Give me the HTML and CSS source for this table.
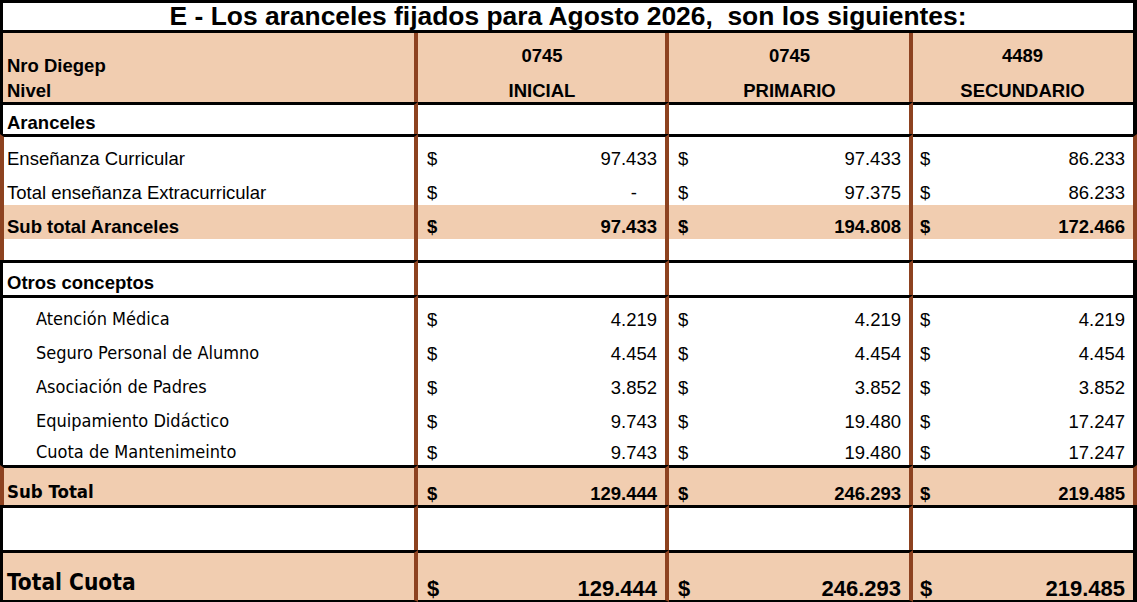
FILE: index.html
```html
<!DOCTYPE html>
<html lang="es">
<head>
<meta charset="utf-8">
<title>Aranceles Agosto 2026</title>
<link rel="stylesheet" href="styles.css">
</head>
<body>
<table class="sheet">
  <colgroup>
    <col class="c1"><col class="c2"><col class="c3"><col class="c4">
  </colgroup>
  <tr class="r-title">
    <td colspan="4" class="title">E - Los aranceles fijados para Agosto 2026,&nbsp; son los siguientes:</td>
  </tr>
  <tr class="r-head-a peach">
    <td class="lab b">Nro Diegep</td>
    <td class="hc">0745</td>
    <td class="hc">0745</td>
    <td class="hc">4489</td>
  </tr>
  <tr class="r-head-b peach">
    <td class="lab b">Nivel</td>
    <td class="hc">INICIAL</td>
    <td class="hc">PRIMARIO</td>
    <td class="hc">SECUNDARIO</td>
  </tr>
  <tr class="r-sect top">
    <td class="lab b">Aranceles</td>
    <td></td><td></td><td></td>
  </tr>
  <tr class="r-first brown top">
    <td class="lab">Enseñanza Curricular</td>
    <td class="m"><div class="money"><span>$</span><span>97.433</span></div></td>
    <td class="m"><div class="money"><span>$</span><span>97.433</span></div></td>
    <td class="m"><div class="money"><span>$</span><span>86.233</span></div></td>
  </tr>
  <tr class="r-item brown">
    <td class="lab">Total enseñanza Extracurricular</td>
    <td class="m"><div class="money"><span>$</span><span class="dash">-</span></div></td>
    <td class="m"><div class="money"><span>$</span><span>97.375</span></div></td>
    <td class="m"><div class="money"><span>$</span><span>86.233</span></div></td>
  </tr>
  <tr class="r-item brown peach">
    <td class="lab b">Sub total Aranceles</td>
    <td class="m b"><div class="money"><span>$</span><span>97.433</span></div></td>
    <td class="m b"><div class="money"><span>$</span><span>194.808</span></div></td>
    <td class="m b"><div class="money"><span>$</span><span>172.466</span></div></td>
  </tr>
  <tr class="r-gap brown">
    <td></td><td></td><td></td><td></td>
  </tr>
  <tr class="r-sect2 top">
    <td class="lab b">Otros conceptos</td>
    <td></td><td></td><td></td>
  </tr>
  <tr class="r-first top">
    <td class="sub">Atención Médica</td>
    <td class="m"><div class="money"><span>$</span><span>4.219</span></div></td>
    <td class="m"><div class="money"><span>$</span><span>4.219</span></div></td>
    <td class="m"><div class="money"><span>$</span><span>4.219</span></div></td>
  </tr>
  <tr class="r-item">
    <td class="sub">Seguro Personal de Alumno</td>
    <td class="m"><div class="money"><span>$</span><span>4.454</span></div></td>
    <td class="m"><div class="money"><span>$</span><span>4.454</span></div></td>
    <td class="m"><div class="money"><span>$</span><span>4.454</span></div></td>
  </tr>
  <tr class="r-item">
    <td class="sub">Asociación de Padres</td>
    <td class="m"><div class="money"><span>$</span><span>3.852</span></div></td>
    <td class="m"><div class="money"><span>$</span><span>3.852</span></div></td>
    <td class="m"><div class="money"><span>$</span><span>3.852</span></div></td>
  </tr>
  <tr class="r-item">
    <td class="sub">Equipamiento Didáctico</td>
    <td class="m"><div class="money"><span>$</span><span>9.743</span></div></td>
    <td class="m"><div class="money"><span>$</span><span>19.480</span></div></td>
    <td class="m"><div class="money"><span>$</span><span>17.247</span></div></td>
  </tr>
  <tr class="r-last">
    <td class="sub">Cuota de Mantenimeinto</td>
    <td class="m"><div class="money"><span>$</span><span>9.743</span></div></td>
    <td class="m"><div class="money"><span>$</span><span>19.480</span></div></td>
    <td class="m"><div class="money"><span>$</span><span>17.247</span></div></td>
  </tr>
  <tr class="r-subtotal brown peach top">
    <td class="lab tb">Sub Total</td>
    <td class="m b"><div class="money"><span>$</span><span>129.444</span></div></td>
    <td class="m b"><div class="money"><span>$</span><span>246.293</span></div></td>
    <td class="m b"><div class="money"><span>$</span><span>219.485</span></div></td>
  </tr>
  <tr class="r-blank top">
    <td></td><td></td><td></td><td></td>
  </tr>
  <tr class="r-total peach top bottom">
    <td class="lab tb big">Total Cuota</td>
    <td class="m b big"><div class="money"><span>$</span><span>129.444</span></div></td>
    <td class="m b big"><div class="money"><span>$</span><span>246.293</span></div></td>
    <td class="m b big"><div class="money"><span>$</span><span>219.485</span></div></td>
  </tr>
</table>
</body>
</html>
```

FILE: styles.css
```css
html, body {
  margin: 0;
  padding: 0;
  background: #ffffff;
}

body {
  font-family: "Liberation Sans", Arial, sans-serif;
  color: #000;
  font-size: 18.5px;
}

.sheet {
  border-collapse: separate;
  border-spacing: 0;
  table-layout: fixed;
  width: 1137px;
}

.c1 { width: 418px; }
.c2 { width: 251px; }
.c3 { width: 244px; }
.c4 { width: 224px; }

.sheet td {
  box-sizing: border-box;
  padding: 0 8px 2px 9px;
  border-right: 4px solid #8d4220;
  vertical-align: bottom;
  line-height: 20px;
  white-space: nowrap;
  overflow: hidden;
}

.sheet td:first-child {
  border-left: 3px solid #000;
  padding-left: 4px;
}

.sheet td:last-child {
  border-right: 4px solid #000;
  padding-left: 7px;
}

.sheet td:first-child:last-child {
  padding-left: 0;
}

/* brown framed rows */
.brown td:first-child {
  border-left: 4px solid #8d4220;
  padding-left: 3px;
}

.brown td:last-child {
  border-right-color: #8d4220;
}

.top td {
  border-top: 3px solid #000;
}

.bottom td {
  border-bottom: 2px solid #000;
}

.peach td {
  background: #f1cdb0;
}

/* title */
.r-title td.title {
  height: 33px;
  border: 3px solid #000;
  border-right-width: 4px;
  padding: 0;
  text-align: center;
  vertical-align: middle;
  font-weight: 700;
  font-size: 26.4px;
  line-height: 27px;
}

.b { font-weight: 700; }

.r-head-a td { height: 43px; padding-bottom: 10px; }
.r-head-a td.lab { padding-bottom: 0; }
.r-head-b td { height: 26px; padding-bottom: 1px; }
.hc { text-align: center; font-weight: 700; }

.r-sect td { height: 32px; padding-bottom: 1px; }
.r-first td { height: 37px; }
.r-item td { height: 34px; }
.r-last td { height: 31px; }
.r-gap td { height: 21px; }
.r-sect2 td { height: 35px; }
.r-subtotal td { height: 40px; padding-bottom: 1px; }
.r-blank td { height: 45px; }
.r-total td { height: 52px; padding-bottom: 1px; }

.sub {
  font-family: "DejaVu Sans", Verdana, sans-serif;
  font-stretch: condensed;
  font-size: 18px;
  padding-left: 33px !important;
  padding-bottom: 3px !important;
}

.tb {
  font-family: "DejaVu Sans", Verdana, sans-serif;
  font-stretch: condensed;
  font-weight: 700;
  font-size: 18.5px;
  padding-bottom: 3px !important;
}

.r-total .tb {
  font-size: 22.5px;
  line-height: 26px;
  padding-bottom: 5px !important;
}

.big {
  font-size: 22px;
  line-height: 26px;
}

.money {
  display: flex;
  justify-content: space-between;
}

.dash {
  padding-right: 20px;
}
```
